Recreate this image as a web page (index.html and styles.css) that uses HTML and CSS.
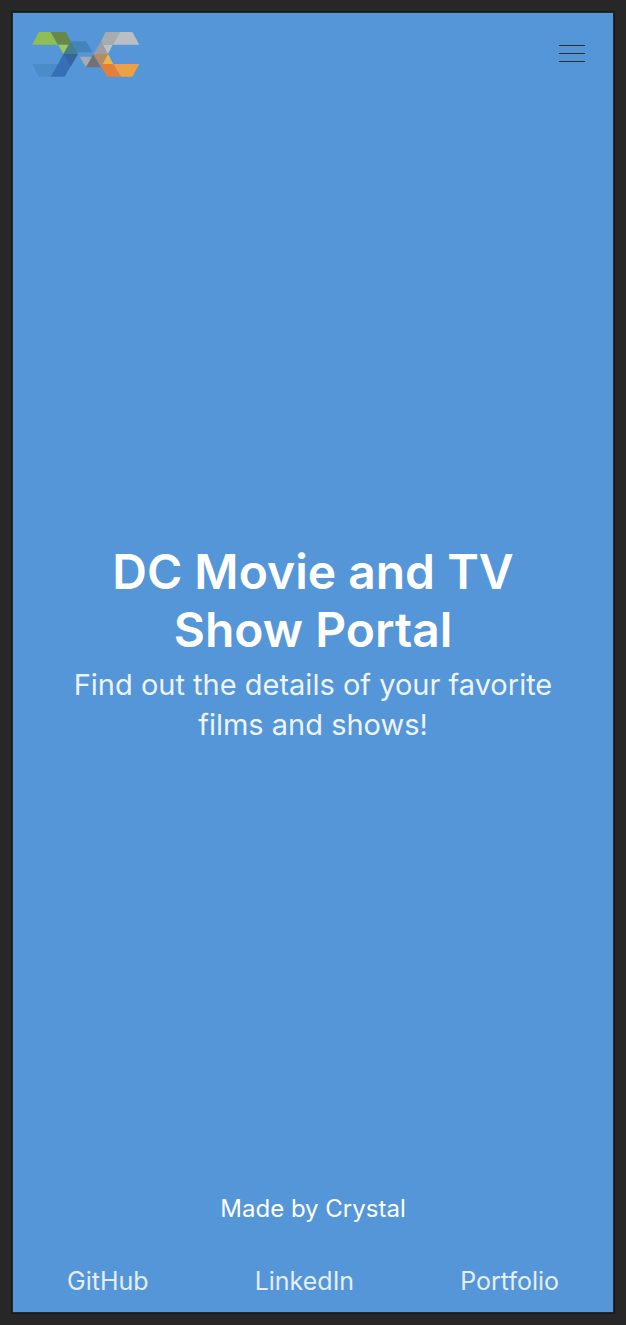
FILE: index.html
```html
<!DOCTYPE html>
<html lang="en">
<head>
<meta charset="utf-8">
<meta name="viewport" content="width=device-width, initial-scale=1">
<title>DC Movie and TV Show Portal</title>
<link rel="stylesheet" href="styles.css">
</head>
<body>
<div class="portal">
  <header class="topbar">
    <a class="brand" href="#" aria-label="Home">
      <svg class="logo" viewBox="24 24 324 135" aria-hidden="true">
        <path fill="#8fbe55" d="M45 24H80L102 62H24Z"/>
        <path fill="#66894a" d="M80 24H125L141 52L133 66L131 62H102Z"/>
        <path fill="#9bc75b" d="M102 62H133L118 90Z"/>
        <path fill="#477f8c" d="M141 52L162 90H118Z"/>
        <path fill="#4384bd" d="M141 52H186L206 85H159Z"/>
        <path fill="#4a8cca" d="M24 120H102L80 158H45Z"/>
        <path fill="#366fb3" d="M102 120L118 90L140 126L122 158H80Z"/>
        <path fill="#34659f" d="M118 90H162L140 128Z"/>
        <path fill="#a6adb1" d="M167 98H205L186 130Z"/>
        <path fill="#727276" d="M208 91L230 130H186Z"/>
        <path fill="#a7acaf" d="M245 24H288L266 62H237L231 52Z"/>
        <path fill="#bbbfc3" d="M288 24H325L346 62H266Z"/>
        <path fill="#9b9fa4" d="M231 52L252 90H208Z"/>
        <path fill="#bec2c4" d="M237 62H266L252 90Z"/>
        <path fill="#b88b67" d="M208 90H252L231 128Z"/>
        <path fill="#ecb54a" d="M252 90L268 120H236Z"/>
        <path fill="#e37f3b" d="M236 120H268L291 158H250L231 128Z"/>
        <path fill="#eba144" d="M268 120H346L325 158H291Z"/>
      </svg>
    </a>
    <button class="menu" type="button" aria-label="Open menu">
      <span class="menu-line"></span>
      <span class="menu-line"></span>
      <span class="menu-line"></span>
    </button>
  </header>
  <main class="hero">
    <h1 class="title">DC Movie and TV Show Portal</h1>
    <p class="subtitle">Find out the details of your favorite films and shows!</p>
  </main>
  <footer class="footer">
    <p class="credit">Made by Crystal</p>
    <nav class="links" aria-label="Author links">
      <a class="link" href="#">GitHub</a>
      <a class="link" href="#">LinkedIn</a>
      <a class="link" href="#">Portfolio</a>
    </nav>
  </footer>
</div>
</body>
</html>
```
FILE: styles.css
```css
* {
  box-sizing: border-box;
}

body {
  margin: 0;
  min-height: 100vh;
  padding: 12px;
  display: flex;
  background: #272727;
  font-family: Inter, Roboto, "Liberation Sans", sans-serif;
  color: #fff;
}

.portal {
  flex: 1;
  display: flex;
  flex-direction: column;
  border: 1px solid #1f2a36;
  outline: 1px solid #1b1917;
  background: #5496d7;
}

.topbar {
  display: flex;
  justify-content: space-between;
  align-items: flex-start;
  padding: 19px 28px 0 19px;
}

.brand,
.logo {
  display: block;
}

.logo {
  width: 108px;
  height: 45px;
}

.menu {
  display: flex;
  flex-direction: column;
  gap: 7px;
  width: 26px;
  margin: 13px 0 0;
  padding: 0;
  border: 0;
  background: none;
  cursor: pointer;
}

.menu-line {
  height: 1px;
  background: #30302c;
}

.hero {
  flex: 1;
  display: flex;
  flex-direction: column;
  justify-content: center;
  align-items: center;
  padding: 18px 48px 0;
  text-align: center;
}

.title {
  margin: 0;
  max-width: 440px;
  font-size: 48px;
  line-height: 58px;
  font-weight: 600;
}

.subtitle {
  margin: 6px 0 0;
  font-size: 29px;
  line-height: 40px;
  color: #edf4fb;
}

.footer {
  padding: 0 54px 15px;
}

.credit {
  margin: 0 0 40px;
  font-size: 24px;
  line-height: 32px;
  text-align: center;
}

.links {
  display: flex;
  justify-content: space-between;
}

.link {
  font-size: 25px;
  line-height: 32px;
  color: #e4eef9;
  text-decoration: none;
}
```
